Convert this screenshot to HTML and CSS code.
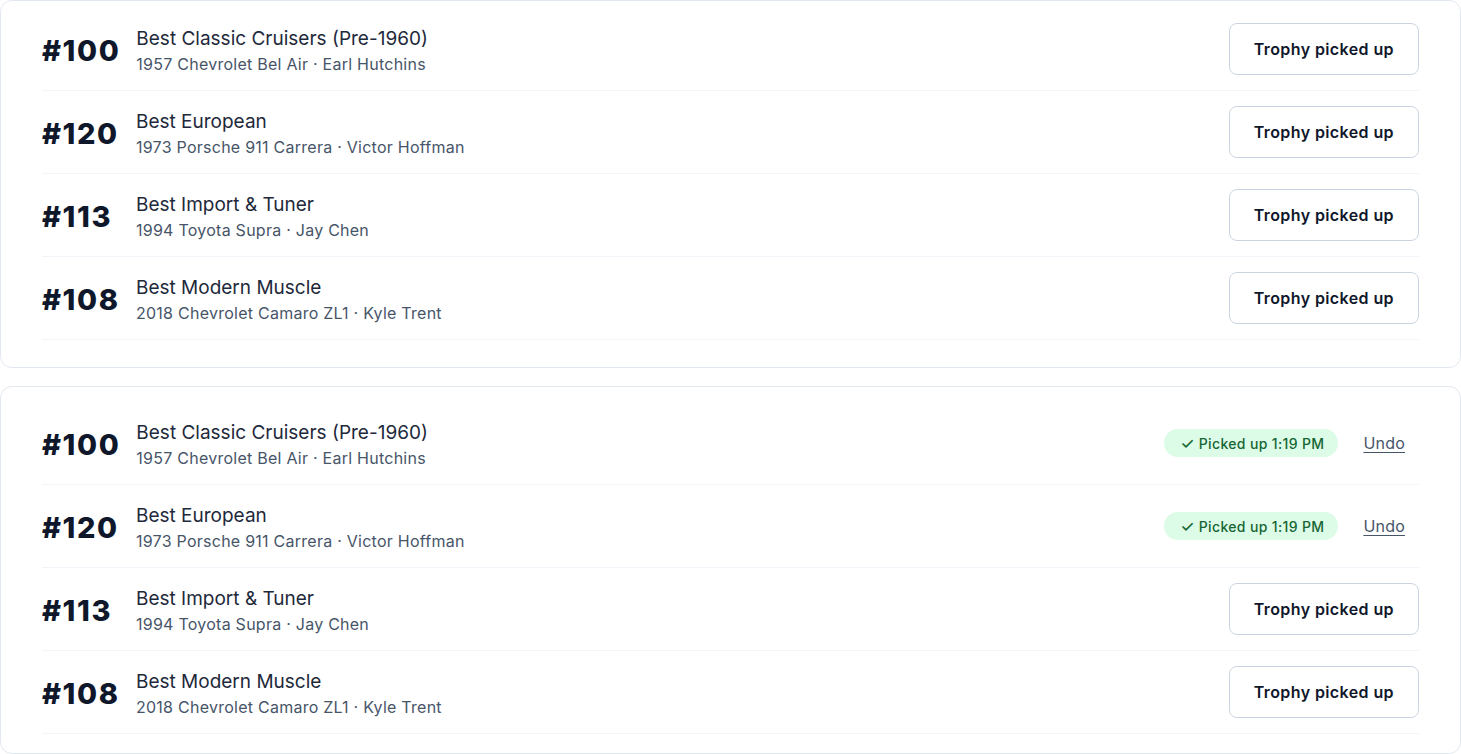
FILE: index.html
```html
<!DOCTYPE html>
<html>

<head>
    <meta charset="UTF-8">
    <title>Trophy Pickup</title>
    <link rel="stylesheet" href="styles.css">
</head>

<body>
    <div class="card card-first">
        <div class="row">
            <span class="num">#100</span>
            <div class="info">
                <div class="award">Best Classic Cruisers (Pre-1960)</div>
                <div class="car">1957 Chevrolet Bel Air · Earl Hutchins</div>
            </div>
            <div class="actions"><button class="pickup">Trophy picked up</button></div>
        </div>
        <div class="row">
            <span class="num">#120</span>
            <div class="info">
                <div class="award">Best European</div>
                <div class="car">1973 Porsche 911 Carrera · Victor Hoffman</div>
            </div>
            <div class="actions"><button class="pickup">Trophy picked up</button></div>
        </div>
        <div class="row">
            <span class="num">#113</span>
            <div class="info">
                <div class="award">Best Import &amp; Tuner</div>
                <div class="car">1994 Toyota Supra · Jay Chen</div>
            </div>
            <div class="actions"><button class="pickup">Trophy picked up</button></div>
        </div>
        <div class="row">
            <span class="num">#108</span>
            <div class="info">
                <div class="award">Best Modern Muscle</div>
                <div class="car">2018 Chevrolet Camaro ZL1 · Kyle Trent</div>
            </div>
            <div class="actions"><button class="pickup">Trophy picked up</button></div>
        </div>
    </div>

    <div class="card card-second">
        <div class="row">
            <span class="num">#100</span>
            <div class="info">
                <div class="award">Best Classic Cruisers (Pre-1960)</div>
                <div class="car">1957 Chevrolet Bel Air · Earl Hutchins</div>
            </div>
            <div class="actions">
                <span class="badge"><span class="tick">✓</span> Picked up 1:19 PM</span>
                <button class="undo">Undo</button>
            </div>
        </div>
        <div class="row">
            <span class="num">#120</span>
            <div class="info">
                <div class="award">Best European</div>
                <div class="car">1973 Porsche 911 Carrera · Victor Hoffman</div>
            </div>
            <div class="actions">
                <span class="badge"><span class="tick">✓</span> Picked up 1:19 PM</span>
                <button class="undo">Undo</button>
            </div>
        </div>
        <div class="row">
            <span class="num">#113</span>
            <div class="info">
                <div class="award">Best Import &amp; Tuner</div>
                <div class="car">1994 Toyota Supra · Jay Chen</div>
            </div>
            <div class="actions"><button class="pickup">Trophy picked up</button></div>
        </div>
        <div class="row">
            <span class="num">#108</span>
            <div class="info">
                <div class="award">Best Modern Muscle</div>
                <div class="car">2018 Chevrolet Camaro ZL1 · Kyle Trent</div>
            </div>
            <div class="actions"><button class="pickup">Trophy picked up</button></div>
        </div>
    </div>
</body>

</html>
```

FILE: styles.css
```css
* {
    box-sizing: border-box;
}

body,
html {
    margin: 0;
    padding: 0;
    background-color: white;
    font-family: Inter, "Noto Sans", sans-serif;
    color: #0f172a;
    overflow: hidden;
}

.card {
    border: 1px solid #e2e8f0;
    border-radius: 12px;
    padding: 0 41px;
    height: 368px;
}

.card-first {
    padding-top: 7px;
}

.card-second {
    margin-top: 18px;
    padding-top: 15px;
}

.row {
    display: flex;
    align-items: center;
    gap: 16px;
    height: 83px;
    border-bottom: 1px solid #f1f5f9;
}

.num {
    flex: 0 0 78px;
    font-size: 29px;
    font-weight: 800;
    letter-spacing: 1.6px;
    white-space: nowrap;
    color: #0f172a;
    padding-top: 2px;
}

.info {
    flex: 1;
    display: flex;
    flex-direction: column;
    padding-top: 3px;
}

.award {
    font-size: 19px;
    line-height: 26px;
    color: #1e293b;
}

.car {
    font-size: 16px;
    line-height: 24px;
    letter-spacing: 0.25px;
    color: #475569;
}

.actions {
    display: flex;
    align-items: center;
    gap: 11px;
}

.pickup {
    height: 52px;
    padding: 0 24px;
    border: 1px solid #cbd5e1;
    border-radius: 8px;
    background-color: white;
    font-family: inherit;
    font-size: 16px;
    font-weight: 600;
    letter-spacing: 0.4px;
    color: #0f172a;
    cursor: pointer;
}

.badge {
    display: inline-flex;
    align-items: center;
    gap: 4px;
    height: 28px;
    padding: 0 14px 0 16px;
    border-radius: 14px;
    background-color: #dcfce7;
    color: #166534;
    font-size: 14px;
    font-weight: 500;
    letter-spacing: 0.35px;
}

.tick {
    font-size: 16px;
    font-weight: 500;
}

.undo {
    border: none;
    background: none;
    padding: 0 14px;
    font-family: inherit;
    font-size: 16px;
    letter-spacing: 0.2px;
    color: #475569;
    text-decoration: underline;
    text-underline-offset: 3px;
    cursor: pointer;
}
```
